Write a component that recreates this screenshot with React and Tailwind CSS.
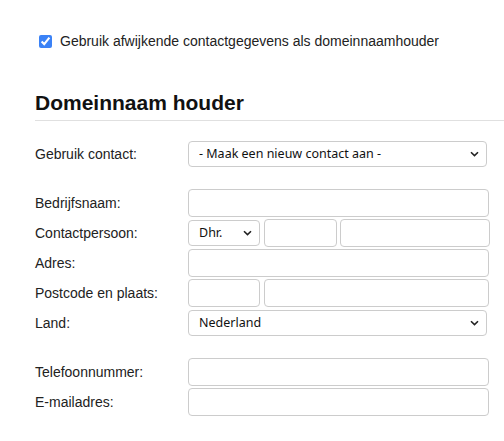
import React from 'react';

const Chevron = () => (
  <svg
    className="pointer-events-none absolute right-[8px] top-1/2 -translate-y-1/2"
    width="9"
    height="6"
    viewBox="0 0 9 6"
    fill="none"
  >
    <path d="M1 1.2 L4.5 4.6 L8 1.2" stroke="#222" strokeWidth="1.6" />
  </svg>
);

const Select = ({ value, width }) => (
  <div className={`relative ${width}`}>
    <select
      defaultValue={value}
      className="h-[26px] w-full appearance-none rounded-[4px] border border-[#ccc] bg-white pl-[10px] font-['Noto_Sans',sans-serif] text-[12.5px] text-[#111] outline-none"
    >
      <option>{value}</option>
    </select>
    <Chevron />
  </div>
);

const Input = ({ width }) => (
  <input
    type="text"
    className={`h-[28px] ${width} rounded-[4px] border border-[#ccc] bg-white outline-none`}
  />
);

const Row = ({ label, children, className = '' }) => (
  <div className={`flex h-[28px] items-center ${className}`}>
    <div className="w-[153px]">{label}</div>
    <div className="flex items-center">{children}</div>
  </div>
);

export default function App() {
  return (
    <div className="min-h-[441px] bg-white pl-[35px] pt-[31px] font-['Liberation_Sans',Arial,sans-serif] text-[14px] text-[#222]">
      <label className="flex h-[20px] items-center">
        <input
          type="checkbox"
          defaultChecked
          className="m-0 ml-[4px] h-[13px] w-[13px] accent-[#3b82f6]"
        />
        <span className="ml-[8px]">Gebruik afwijkende contactgegevens als domeinnaamhouder</span>
      </label>

      <h2 className="mt-[40px] border-b border-[#e0e0e0] pb-[5px] text-[21px] font-bold leading-[24px] text-[#111]">
        Domeinnaam houder
      </h2>

      <div className="mt-[19px]">
        <Row label="Gebruik contact:">
          <Select value="- Maak een nieuw contact aan -" width="w-[299px]" />
        </Row>
      </div>

      <div className="mt-[21px] flex flex-col gap-[2px]">
        <Row label="Bedrijfsnaam:">
          <Input width="w-[301px]" />
        </Row>
        <Row label="Contactpersoon:">
          <Select value="Dhr." width="w-[72px]" />
          <div className="ml-[4px]">
            <Input width="w-[73px]" />
          </div>
          <div className="ml-[3px]">
            <Input width="w-[150px]" />
          </div>
        </Row>
        <Row label="Adres:">
          <Input width="w-[301px]" />
        </Row>
        <Row label="Postcode en plaats:">
          <Input width="w-[72px]" />
          <div className="ml-[4px]">
            <Input width="w-[225px]" />
          </div>
        </Row>
        <Row label="Land:">
          <Select value="Nederland" width="w-[299px]" />
        </Row>
      </div>

      <div className="mt-[21px] flex flex-col gap-[2px]">
        <Row label="Telefoonnummer:">
          <Input width="w-[301px]" />
        </Row>
        <Row label="E-mailadres:">
          <Input width="w-[301px]" />
        </Row>
      </div>
    </div>
  );
}
